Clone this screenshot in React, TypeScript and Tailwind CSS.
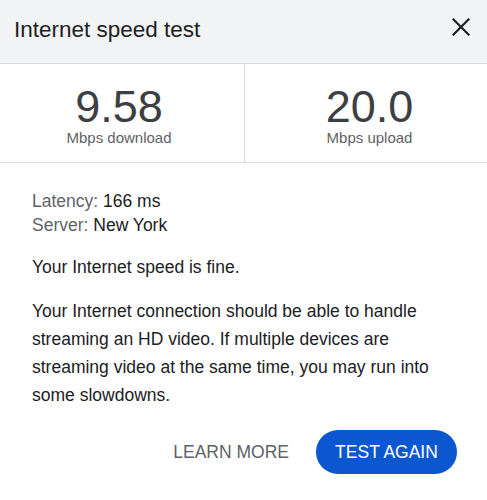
function CloseIcon() {
  return (
    <svg className="block" width="18" height="18" viewBox="0 0 18 18" fill="none">
      <path d="M1.5 1.5L16.5 16.5M16.5 1.5L1.5 16.5" stroke="#202124" strokeWidth="2.2" strokeLinecap="square" />
    </svg>
  );
}

function Header() {
  return (
    <div className="h-[64px] bg-[#f1f3f4] border-b border-[#dadce0] flex items-start justify-between pl-[14px] pr-[17px] pt-[17px]">
      <p className="text-[22.5px] leading-[25px] text-[#202124]">Internet speed test</p>
      <button className="mt-[1px]" aria-label="Close">
        <CloseIcon />
      </button>
    </div>
  );
}

function Stat({ value, label }: { value: string; label: string }) {
  return (
    <div className="flex flex-col items-center pt-[21px] pb-[16px]">
      <p className="text-[45px] leading-[44px] text-[#3c4043]">{value}</p>
      <p className="text-[15px] leading-[17px] text-[#5f6368]">{label}</p>
    </div>
  );
}

function Stats() {
  return (
    <div className="flex border-b border-[#dadce0]">
      <div className="w-[238px]">
        <Stat value="9.58" label="Mbps download" />
      </div>
      <div className="w-[14px] flex justify-start pl-[6px]">
        <div className="w-px bg-[#dadce0]" />
      </div>
      <div className="flex-1">
        <Stat value="20.0" label="Mbps upload" />
      </div>
    </div>
  );
}

function Details() {
  return (
    <div className="px-[32px] pt-[26px] text-[17.5px] text-[#202124]">
      <div className="leading-[24px]">
        <p>
          <span className="text-[#5f6368]">Latency:</span> 166 ms
        </p>
        <p>
          <span className="text-[#5f6368]">Server:</span> New York
        </p>
      </div>
      <p className="mt-[18px] leading-[24px]">Your Internet speed is fine.</p>
      <p className="mt-[18px] leading-[28px]">
        Your Internet connection should be able to handle streaming an HD video. If multiple devices are streaming video at the same time, you may run into some slowdowns.
      </p>
    </div>
  );
}

function Actions() {
  return (
    <div className="flex items-center justify-end gap-[27px] pr-[30px] mt-[21px]">
      <button className="text-[17.5px] text-[#5f6368]">LEARN MORE</button>
      <button className="w-[141px] h-[44px] rounded-full bg-[#0b57d0] text-white text-[17.5px] flex items-center justify-center">
        TEST AGAIN
      </button>
    </div>
  );
}

export default function App() {
  return (
    <div className="w-[487px] h-[500px] bg-white font-['Liberation_Sans',Arial,sans-serif] overflow-hidden">
      <Header />
      <Stats />
      <Details />
      <Actions />
    </div>
  );
}
